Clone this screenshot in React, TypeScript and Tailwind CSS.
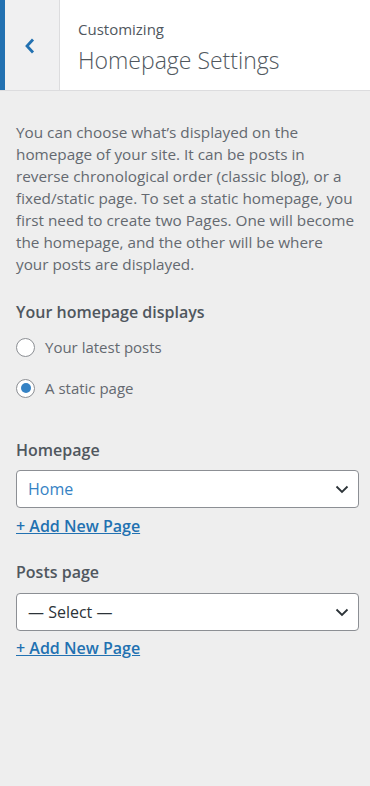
import { FunctionComponent } from "react";

const font = { fontFamily: '"Open Sans", "Noto Sans", sans-serif' };

const Chevron: FunctionComponent = (): JSX.Element => (
  <svg width="14" height="14" viewBox="0 0 14 14" fill="none">
    <path d="M1.5 4.5 L7 10 L12.5 4.5" stroke="#2c3338" strokeWidth="1.8" />
  </svg>
);

const Radio: FunctionComponent<{ checked?: boolean; label: string }> = ({
  checked,
  label,
}): JSX.Element => (
  <label className="flex items-center gap-[10px] h-[20px]">
    <span className="w-[19px] h-[19px] rounded-full border border-[#8c8f94] bg-white flex items-center justify-center">
      {checked && <span className="w-[10px] h-[10px] rounded-full bg-[#3582c4]" />}
    </span>
    <span className="text-[15px] text-[#646970]">{label}</span>
  </label>
);

const SelectBox: FunctionComponent<{ value: string; blue?: boolean }> = ({
  value,
  blue,
}): JSX.Element => (
  <div className="h-[38px] w-full bg-white border border-[#8c8f94] rounded-[4px] flex items-center justify-between pl-[11px] pr-[9px]">
    <span className={`text-[16px] ${blue ? "text-[#3582c4]" : "text-[#2c3338]"}`}>
      {value}
    </span>
    <Chevron />
  </div>
);

const AddLink: FunctionComponent<{ className: string }> = ({ className }): JSX.Element => (
  <a
    className={`${className} text-[16px] leading-[22px] font-semibold text-[#2271b1] underline w-fit`}
  >
    + Add New Page
  </a>
);

const App: FunctionComponent = (): JSX.Element => {
  return (
    <div className="w-[370px] min-h-[786px] bg-[#eeeeee] flex flex-col" style={font}>
      <div className="h-[91px] flex bg-white border-b border-[#dcdcde]">
        <div className="w-[5px] bg-[#2271b1]" />
        <div className="w-[55px] bg-[#f0f0f1] border-r border-[#dcdcde] flex items-center justify-center pr-[7px] pt-[2px]">
          <svg width="14" height="18" viewBox="0 0 14 18" fill="none">
            <path d="M11 2.5 L5 9 L11 15.5" stroke="#2271b1" strokeWidth="2.8" />
          </svg>
        </div>
        <div className="flex-1 flex flex-col pl-[18px] pt-[18px]">
          <span className="text-[15px] leading-[22px] text-[#50575e]">Customizing</span>
          <span className="text-[23px] leading-[32px] font-light text-[#50575e] mt-[4px]">
            Homepage Settings
          </span>
        </div>
      </div>
      <div className="pl-[16px] pr-[11px] pt-[30px] flex flex-col">
        <p className="text-[15.3px] leading-[22px] text-[#646970]">
          You can choose what’s displayed on the homepage of your site. It can be posts in reverse
          chronological order (classic blog), or a fixed/static page. To set a static homepage, you
          first need to create two Pages. One will become the homepage, and the other will be where
          your posts are displayed.
        </p>
        <div className="mt-[27px] text-[16px] leading-[20px] font-semibold text-[#50575e]">
          Your homepage displays
        </div>
        <div className="flex flex-col gap-[21px] mt-[15px]">
          <Radio label="Your latest posts" />
          <Radio checked label="A static page" />
        </div>
        <div className="mt-[42px] text-[16px] leading-[20px] font-semibold text-[#50575e]">
          Homepage
        </div>
        <div className="mt-[10px]">
          <SelectBox value="Home" blue />
        </div>
        <AddLink className="mt-[7px]" />
        <div className="mt-[25px] text-[16px] leading-[20px] font-semibold text-[#50575e]">
          Posts page
        </div>
        <div className="mt-[11px]">
          <SelectBox value="— Select —" />
        </div>
        <AddLink className="mt-[6px]" />
      </div>
    </div>
  );
};

export default App;
